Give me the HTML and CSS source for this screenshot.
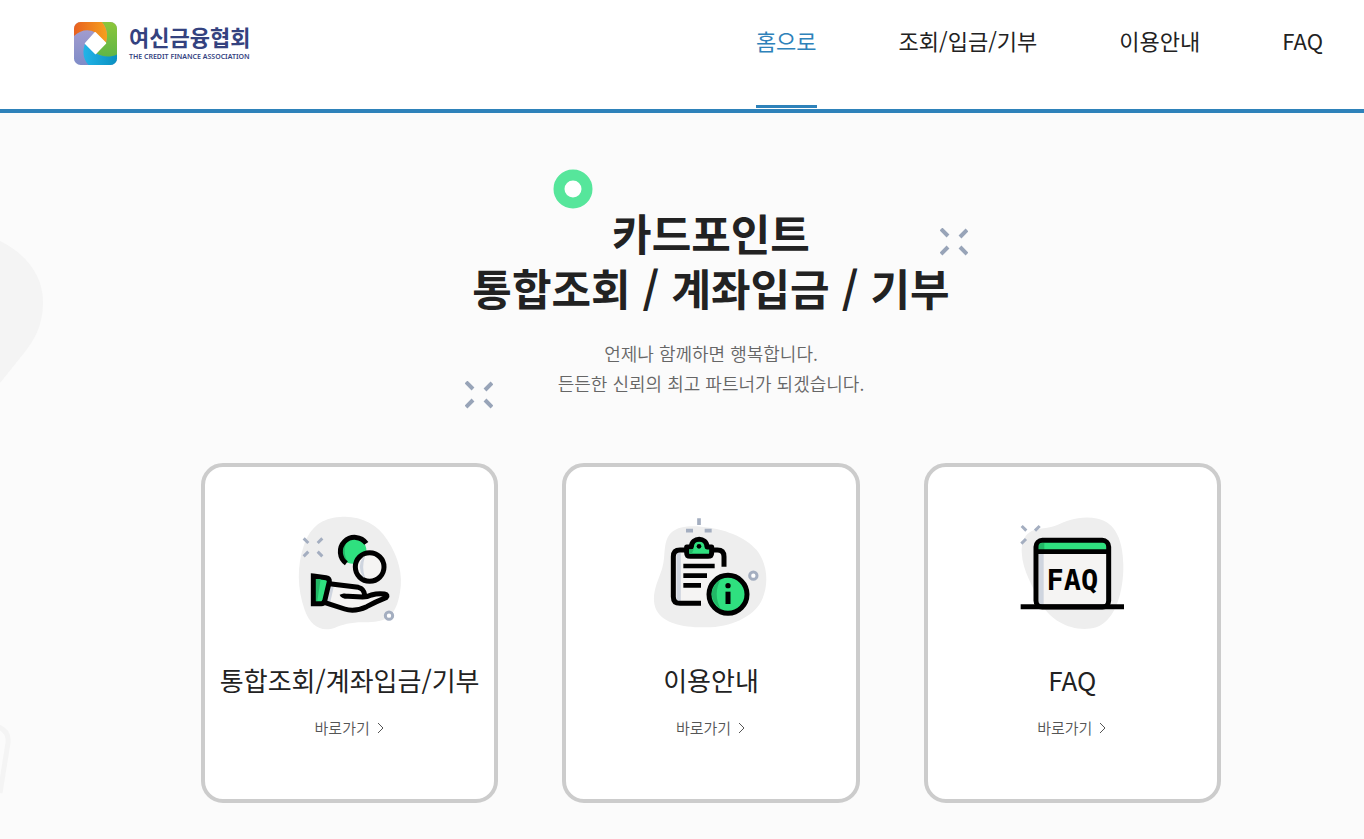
FILE: index.html
```html
<!DOCTYPE html>
<html lang="ko">
<head>
    <meta charset="UTF-8">
    <meta name="viewport" content="width=device-width, initial-scale=1.0">
    <title>여신금융협회 카드포인트 통합조회</title>
    <link rel="stylesheet" href="styles.css">
</head>
<body>
    <header class="header">
        <a class="logo" href="#">
            <svg class="logo-mark" viewBox="0 0 130 130" aria-hidden="true">
                <defs>
                    <clipPath id="mark"><rect width="130" height="130" rx="20"/></clipPath>
                    <linearGradient id="orange"><stop offset="0" stop-color="#e8601f"/><stop offset="1" stop-color="#f6a01d"/></linearGradient>
                    <linearGradient id="green" x2="0" y2="1"><stop offset="0" stop-color="#8cc63a"/><stop offset="1" stop-color="#5fb548"/></linearGradient>
                    <linearGradient id="blue"><stop offset="0" stop-color="#22b4e8"/><stop offset="1" stop-color="#0a90c0"/></linearGradient>
                    <linearGradient id="purple" x2="0" y2="1"><stop offset="0" stop-color="#a99fd0"/><stop offset="1" stop-color="#7f8cc8"/></linearGradient>
                </defs>
                <g clip-path="url(#mark)">
                    <rect width="130" height="130" fill="url(#purple)"/>
                    <path d="M84 0H130V104C110 110 84 106 64 94L96 64C104 42 100 18 84 0Z" fill="url(#green)"/>
                    <path d="M0 0H84C100 18 104 42 96 64L64 32C44 20 20 24 0 42Z" fill="url(#orange)"/>
                    <path d="M130 98V130H44C28 112 24 88 34 64L64 94C84 106 110 108 130 98Z" fill="url(#blue)"/>
                    <path d="M64 33L95 64L65 95L35 65Z" fill="#fff" stroke="#fff" stroke-width="5" stroke-linejoin="round"/>
                </g>
            </svg>
            <span class="logo-text">
                <strong>여신금융협회</strong>
                <small>THE CREDIT FINANCE ASSOCIATION</small>
            </span>
        </a>
        <nav class="nav">
            <a class="active" href="#">홈으로</a>
            <a href="#">조회/입금/기부</a>
            <a href="#">이용안내</a>
            <a href="#">FAQ</a>
        </nav>
    </header>

    <main class="main">
        <svg class="bg-blob" viewBox="0 0 44 150" aria-hidden="true"><path d="M0 1C28 15 43 37 43 62C43 86 34 100 24 113L0 143Z" fill="#f4f4f4"/></svg>
        <svg class="bg-line" viewBox="0 0 14 80" aria-hidden="true"><path d="M-4 3C6 6 9 12 8 20L0 70" fill="none" stroke="#f4f4f4" stroke-width="5"/></svg>

        <section class="hero">
            <svg class="ring" viewBox="0 0 40 40" aria-hidden="true"><circle cx="20" cy="20" r="14" fill="#fff" stroke="#56e69b" stroke-width="11"/></svg>
            <svg class="spark spark-right" viewBox="0 0 28 28" aria-hidden="true"><path d="M1 1L8 8M27 2L20 9M1 26L8 19M20 19L27 26"/></svg>
            <svg class="spark spark-left" viewBox="0 0 28 28" aria-hidden="true"><path d="M1 1L8 8M27 2L20 9M1 26L8 19M20 19L27 26"/></svg>
            <h1>카드포인트<br>통합조회 / 계좌입금 / 기부</h1>
            <p>언제나 함께하면 행복합니다.<br>든든한 신뢰의 최고 파트너가 되겠습니다.</p>
        </section>

        <section class="cards">
            <a class="card" href="#">
                <svg class="card-icon" viewBox="0 0 360 390" aria-hidden="true">
                    <path d="M150 36C205 30 262 55 292 105C325 155 340 210 330 262C318 335 290 350 235 352C185 350 160 358 135 368C95 382 62 365 44 315C22 250 20 185 42 120C62 65 95 40 150 36Z" fill="#eee"/>
                    <path d="M41 100L55 114M97 100L83 114M41 154L55 140M83 140L97 154" stroke="#a4aec0" stroke-width="9"/>
                    <circle cx="297" cy="332" r="11" fill="#fff" stroke="#a4aec0" stroke-width="9"/>
                    <circle cx="189" cy="136" r="40" fill="#2fe07f"/>
                    <path d="M178 98A40 40 0 0 0 176 174A62 62 0 0 1 178 98" fill="#22b866"/>
                    <path d="M229 115A43 43 0 1 0 169 175" fill="none" stroke="#000" stroke-width="15"/>
                    <circle cx="239" cy="186" r="43" fill="#f5f4f3" stroke="#000" stroke-width="15"/>
                    <path d="M222 156Q202 186 222 216Q212 186 222 156" fill="#cfd5df" stroke="#cfd5df" stroke-width="5"/>
                    <path d="M118 238L210 249Q222 253 226 268L288 267Q296 272 289 278L222 309Q192 320 164 311L105 293Z" fill="#f5f4f3"/>
                    <path d="M124 245L114 290" stroke="#cfd5df" stroke-width="14"/>
                    <path d="M70 213L108 218Q119 220 118 230L104 288Q101 296 94 296H70Z" fill="#2fe07f" stroke="#000" stroke-width="15"/>
                    <path d="M78 222L92 222L82 288H78Z" fill="#22b866"/>
                    <path d="M118 236L205 247Q222 251 224 270M156 267Q158 274 174 274L218 276Q232 276 244 270Q265 264 283 267Q296 270 288 278Q258 290 230 305Q194 322 164 312L105 293" fill="none" stroke="#000" stroke-width="15" stroke-linejoin="round"/>
                </svg>
                <h2>통합조회/계좌입금/기부</h2>
                <span class="go">바로가기 <svg viewBox="0 0 8 12" aria-hidden="true"><path d="M1 1L6 6L1 11"/></svg></span>
            </a>
            <a class="card" href="#">
                <svg class="card-icon" viewBox="18 0 360 390" aria-hidden="true">
                    <path d="M80 82C100 64 135 62 170 65C235 70 300 95 335 135C370 180 372 245 348 290C325 335 255 368 180 367C115 368 55 355 34 315C15 275 38 230 50 195C65 155 50 110 80 82Z" fill="#eee"/>
                    <path d="M162 40V60M123 77H144M179 77H200" stroke="#a4aec0" stroke-width="11"/>
                    <circle cx="325" cy="212" r="11" fill="#fff" stroke="#a4aec0" stroke-width="9"/>
                    <path d="M168 295H100Q85 295 85 278V153Q85 135 102 135H220Q238 135 238 153V186H225V240L185 295Z" fill="#f5f4f3"/>
                    <path d="M101 143V288" stroke="#cfd5df" stroke-width="13"/>
                    <path d="M168 295H105Q85 295 85 275V155Q85 135 105 135H217Q237 135 237 155V185" fill="none" stroke="#000" stroke-width="15"/>
                    <path d="M125 126H139C140 95 185 95 186 126H200V143Q200 154 189 154H136Q125 154 125 143Z" fill="#2fe07f" stroke="#000" stroke-width="15" stroke-linejoin="round"/>
                    <circle cx="162" cy="124" r="7" fill="#000"/>
                    <path d="M132 133H146L140 147H136Q132 147 132 142Z" fill="#22b866"/>
                    <path d="M115 183H209M115 212H186M115 241H168" stroke="#000" stroke-width="14"/>
                    <circle cx="249" cy="268" r="57" fill="#2fe07f" stroke="#000" stroke-width="15"/>
                    <path d="M228 222Q172 265 228 314Q202 266 228 222" fill="#22b866"/>
                    <circle cx="249" cy="242" r="8"/>
                    <path d="M249 260V297" stroke="#000" stroke-width="15"/>
                </svg>
                <h2>이용안내</h2>
                <span class="go">바로가기 <svg viewBox="0 0 8 12" aria-hidden="true"><path d="M1 1L6 6L1 11"/></svg></span>
            </a>
            <a class="card" href="#">
                <svg class="card-icon" viewBox="7 -15 360 390" aria-hidden="true">
                    <path d="M58 68C75 54 105 58 135 48C175 30 215 15 265 26C320 38 340 95 341 165C342 240 320 330 260 352C195 370 125 335 98 285C75 240 38 185 36 125C36 100 42 80 58 68Z" fill="#eee"/>
                    <path d="M36 48L50 62M90 48L76 62M35 101L49 87" stroke="#a4aec0" stroke-width="9"/>
                    <rect x="79" y="92" width="218" height="199" rx="15" fill="#f5f4f3"/>
                    <path d="M95 130V284" stroke="#cfd5df" stroke-width="14"/>
                    <path d="M85 125V109Q85 96 98 96H278Q291 96 291 109V125Z" fill="#2fe07f"/>
                    <path d="M86 122V109Q86 98 104 98V122Z" fill="#22b866"/>
                    <rect x="79" y="91" width="218" height="200" rx="19" fill="none" stroke="#000" stroke-width="15"/>
                    <path d="M79 125H297" stroke="#000" stroke-width="14"/>
                    <path d="M33 290H343" stroke="#000" stroke-width="15"/>
                    <text class="faq-text" x="188" y="240" text-anchor="middle">FAQ</text>
                </svg>
                <h2>FAQ</h2>
                <span class="go">바로가기 <svg viewBox="0 0 8 12" aria-hidden="true"><path d="M1 1L6 6L1 11"/></svg></span>
            </a>
        </section>
    </main>
</body>
</html>
```
FILE: styles.css
```css
* {
    box-sizing: border-box;
}
body {
    margin: 0;
    min-height: 100vh;
    display: flex;
    flex-direction: column;
    background-color: #fbfbfb;
    color: #222;
    font-family: "Noto Sans CJK KR", "Noto Sans", sans-serif;
}
a {
    color: inherit;
    text-decoration: none;
}

/* header */
.header {
    display: flex;
    justify-content: space-between;
    align-items: flex-start;
    padding: 0 41px 0 74px;
    background-color: #fff;
    border-bottom: 4px solid #2e82ba;
}
.logo {
    display: flex;
    gap: 12px;
    padding-top: 22px;
}
.logo-mark {
    width: 43px;
    height: 43px;
}
.logo-text {
    display: flex;
    flex-direction: column;
    color: #34427f;
    white-space: nowrap;
}
.logo-text strong {
    font-size: 22px;
    line-height: 28px;
    font-weight: 700;
}
.logo-text small {
    font-family: "Noto Sans", sans-serif;
    font-size: 7px;
    line-height: 14px;
    font-weight: 600;
}
.nav {
    display: flex;
    gap: 82px;
    font-size: 22px;
    line-height: 32px;
}
.nav a {
    height: 109px;
    padding-top: 24px;
    white-space: nowrap;
}
.nav .active {
    height: 108px;
    color: #2e82ba;
    border-bottom: 3px solid #2e82ba;
}

/* main */
.main {
    position: relative;
    flex: 1;
    padding: 92px 0 36px 58px;
    overflow: hidden;
}
.bg-blob {
    position: absolute;
    left: 0;
    top: 127px;
    width: 44px;
    height: 150px;
}
.bg-line {
    position: absolute;
    left: 0;
    top: 610px;
    width: 14px;
    height: 80px;
}
.hero {
    position: relative;
    width: 500px;
    margin: 0 auto;
    text-align: center;
    white-space: nowrap;
}
.hero h1 {
    margin: 0 0 23px;
    font-size: 43px;
    line-height: 55px;
    font-weight: 700;
}
.hero p {
    margin: 0;
    font-size: 18px;
    line-height: 30px;
    font-weight: 350;
    color: #666;
}
.ring {
    position: absolute;
    left: 92px;
    top: -36px;
    width: 40px;
    height: 40px;
}
.spark {
    position: absolute;
    width: 28px;
    height: 28px;
    fill: none;
    stroke: #98a4b8;
    stroke-width: 4;
}
.spark-right {
    right: -7px;
    top: 23px;
}
.spark-left {
    left: 4px;
    top: 176px;
}

/* cards */
.cards {
    display: grid;
    grid-template-columns: repeat(3, 1fr);
    gap: 64px;
    max-width: 1020px;
    margin: 65px auto 0;
}
.card {
    display: flex;
    flex-direction: column;
    align-items: center;
    padding: 38px 0 59px;
    background-color: #fff;
    border: 4px solid #ccc;
    border-radius: 22px;
}
.card-icon {
    width: 120px;
    height: 130px;
}
.card h2 {
    margin: 25px 0 16px;
    font-size: 26px;
    line-height: 40px;
    font-weight: 400;
    white-space: nowrap;
}
.go {
    display: flex;
    align-items: center;
    gap: 7px;
    font-size: 15px;
    line-height: 24px;
    font-weight: 350;
    color: #555;
}
.go svg {
    width: 8px;
    height: 12px;
    fill: none;
    stroke: #555;
}
.faq-text {
    font-family: "DejaVu Sans Mono", monospace;
    font-size: 86px;
    font-weight: 700;
}
```
